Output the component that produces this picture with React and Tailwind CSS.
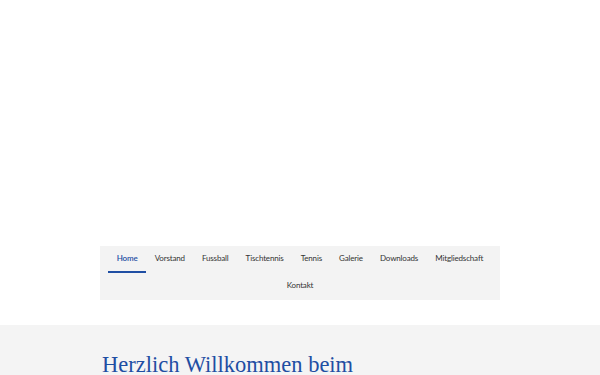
export default function App() {
  const items = ["Home", "Vorstand", "Fussball", "Tischtennis", "Tennis", "Galerie", "Downloads", "Mitgliedschaft", "Kontakt"];
  return (
    <div className="min-h-[375px] bg-white">
      <div className="h-[246px]" />
      <nav className="mx-auto w-[400px] bg-[#f3f3f3]">
        <ul className="flex flex-wrap justify-center">
          {items.map((it, i) => (
            <li
              key={it}
              className={
                "flex h-[27px] items-center px-[8.5px] pb-[1px] text-[8px] tracking-[-0.15px] font-['Lato',sans-serif] " +
                (i === 0 ? "border-b-2 border-[#1f4ea3] text-[#1f4ea3] font-semibold" : "border-b-2 border-transparent text-[#333333]")
              }
            >
              {it}
            </li>
          ))}
        </ul>
      </nav>
      <div className="h-[25px]" />
      <section className="bg-[#f4f4f4] pt-[25px]">
        <div className="mx-auto w-[400px]">
          <h1 className="ml-[2px] text-[22.5px] leading-[30px] text-[#1f4ea3] font-['Liberation_Serif',serif]">
            Herzlich Willkommen beim
          </h1>
        </div>
      </section>
    </div>
  );
}
